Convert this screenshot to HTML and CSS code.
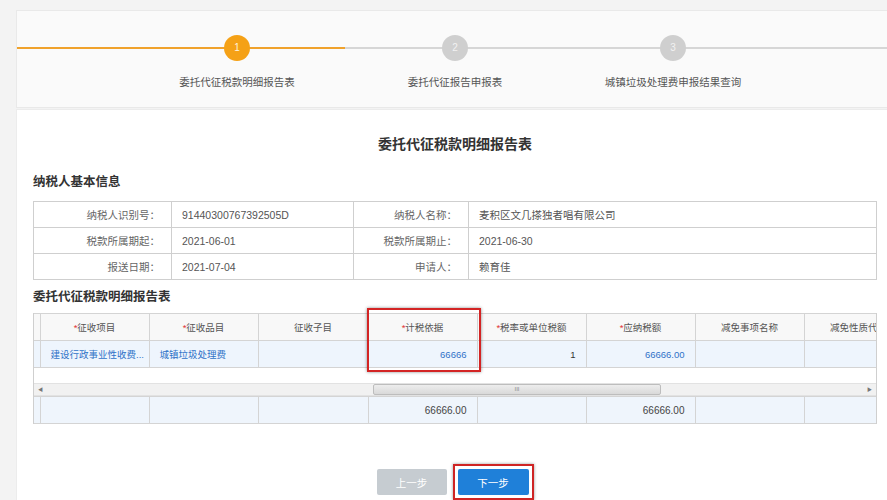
FILE: index.html
```html
<!DOCTYPE html>
<html lang="zh-CN">
<head>
<meta charset="utf-8">
<title>委托代征税款明细报告表</title>
<link rel="stylesheet" href="styles.css">
</head>
<body>
<div class="page">
  <div class="steps-panel">
    <div class="steps">
      <div class="step active"><span class="dot">1</span><span class="label">委托代征税款明细报告表</span></div>
      <div class="step"><span class="dot">2</span><span class="label">委托代征报告申报表</span></div>
      <div class="step"><span class="dot">3</span><span class="label">城镇垃圾处理费申报结果查询</span></div>
    </div>
  </div>
  <div class="main">
    <h1 class="title">委托代征税款明细报告表</h1>
    <h2 class="sec">纳税人基本信息</h2>
    <table class="info">
      <colgroup><col class="c1"><col class="c2"><col class="c3"><col></colgroup>
      <tr><td class="lbl">纳税人识别号：</td><td>91440300767392505D</td><td class="lbl">纳税人名称：</td><td>麦积区文几搽独者唱有限公司</td></tr>
      <tr><td class="lbl">税款所属期起：</td><td>2021-06-01</td><td class="lbl">税款所属期止：</td><td>2021-06-30</td></tr>
      <tr><td class="lbl">报送日期：</td><td>2021-07-04</td><td class="lbl">申请人：</td><td>赖育佳</td></tr>
    </table>
    <h2 class="sec sec2">委托代征税款明细报告表</h2>
    <div class="grid">
      <div class="grid-view">
        <table class="gt">
          <colgroup><col class="rn"><col class="w"><col class="w"><col class="w w110"><col class="w"><col class="w"><col class="w"><col class="w"><col class="w"></colgroup>
          <tr class="head">
            <td></td>
            <td><i>*</i>征收项目</td>
            <td><i>*</i>征收品目</td>
            <td>征收子目</td>
            <td><i>*</i>计税依据</td>
            <td><i>*</i>税率或单位税额</td>
            <td><i>*</i>应纳税额</td>
            <td>减免事项名称</td>
            <td>减免性质代码</td>
          </tr>
          <tr class="data">
            <td></td>
            <td class="link">建设行政事业性收费...</td>
            <td class="link">城镇垃圾处理费</td>
            <td></td>
            <td class="num link">66666</td>
            <td class="num dark">1</td>
            <td class="num link">66666.00</td>
            <td></td>
            <td></td>
          </tr>
        </table>
      </div>
      <div class="grid-space"></div>
      <div class="hscroll">
        <span class="arr">&#9664;</span>
        <span class="thumb">III</span>
        <span class="arr arr-r">&#9654;</span>
      </div>
      <div class="grid-view">
        <table class="gt foot">
          <colgroup><col class="rn"><col class="w"><col class="w"><col class="w w110"><col class="w"><col class="w"><col class="w"><col class="w"><col class="w"></colgroup>
          <tr>
            <td></td><td></td><td></td><td></td>
            <td class="num">66666.00</td>
            <td></td>
            <td class="num">66666.00</td>
            <td></td><td></td>
          </tr>
        </table>
      </div>
      <div class="highlight"></div>
    </div>
    <div class="actions">
      <button class="btn prev" type="button">上一步</button>
      <span class="mark"><button class="btn next" type="button">下一步</button></span>
    </div>
  </div>
</div>
</body>
</html>
```

FILE: styles.css
```css
* { box-sizing: border-box; }
html, body { margin: 0; padding: 0; }
body {
  background: #f3f3f3;
  font-family: "Liberation Sans", "Noto Sans CJK SC", sans-serif;
  color: #444;
  width: 887px;
  height: 500px;
  overflow: hidden;
}
.page { padding: 10px 0 0 16px; }

.steps-panel {
  background: #fafafa;
  border: 1px solid #e9e9e9;
  border-right: none;
  height: 98px;
}
.steps {
  display: flex;
  padding: 24px 0 0 111px;
  height: 100%;
  background-image: linear-gradient(to right, #f0a22c 0, #f0a22c 328px, #d6d6d6 328px, #d6d6d6 100%);
  background-size: 100% 2px;
  background-position: 0 36px;
  background-repeat: no-repeat;
}
.step {
  width: 218px;
  display: flex;
  flex-direction: column;
  align-items: center;
}
.dot {
  width: 26px;
  height: 26px;
  border-radius: 50%;
  background: #cfcfcf;
  color: #f2f2f2;
  font-size: 10px;
  line-height: 26px;
  text-align: center;
}
.step.active .dot { background: #f5a116; color: #fff3dd; }
.label {
  margin-top: 13px;
  font-size: 10.5px;
  line-height: 16px;
  color: #555;
  white-space: nowrap;
}

.main {
  background: #fff;
  border-left: 1px solid #ececec;
  border-top: 1px solid #ececec;
  margin-top: 1px;
  height: 392px;
  padding: 24px 10px 0 16px;
}
.title {
  margin: 0 0 19px;
  text-align: center;
  font-size: 14px;
  line-height: 20px;
  font-weight: bold;
  color: #333;
}
.sec {
  margin: 0 0 10px;
  font-size: 12.5px;
  line-height: 18px;
  font-weight: bold;
  color: #333;
}
.sec2 { margin: 8px 0 7px; }

.info {
  width: 844px;
  border-collapse: collapse;
  table-layout: fixed;
  font-size: 10.5px;
  color: #555;
}
.info col.c1 { width: 138px; }
.info col.c2 { width: 182px; }
.info col.c3 { width: 115px; }
.info td {
  border: 1px solid #cfcfcf;
  height: 26px;
  padding: 0 10px;
  white-space: nowrap;
}
.info td.lbl { text-align: right; padding-right: 11px; color: #666; }

.grid {
  position: relative;
  width: 844px;
  border: 1px solid #cfcfcf;
  border-top: none;
  border-bottom: none;
}
.grid-view { overflow: hidden; width: 100%; }
.gt {
  width: 879px;
  border-collapse: collapse;
  table-layout: fixed;
  font-size: 9.5px;
}
.gt col.rn { width: 6px; }
.gt col.w { width: 109px; }
.gt col.w110 { width: 110px; }
.gt td {
  border: 1px solid #d4d4d4;
  height: 27px;
  padding: 0 10px;
  white-space: nowrap;
  overflow: hidden;
}
.gt td:first-child { padding: 0; border-left: none; }
.gt tr.head td { background: #f8f8f8; text-align: center; color: #555; }
.gt tr.head td i { font-style: normal; color: #e03434; }
.gt tr.data td { background: #eef5fd; }
.gt td.link { color: #2f72c8; }
.gt td.num { text-align: right; }
.gt td.dark { color: #333; }
.gt.foot td { background: #eff5fc; color: #444; font-size: 10px; }

.grid-space { height: 15px; background: #fff; }
.hscroll {
  display: flex;
  align-items: center;
  height: 13px;
  background: #f1f1f1;
  border-top: 1px solid #e2e2e2;
  border-bottom: 1px solid #e2e2e2;
}
.arr {
  width: 13px;
  font-size: 5px;
  color: #777;
  text-align: center;
  line-height: 11px;
}
.arr-r { margin-left: auto; }
.thumb {
  margin-left: 326px;
  width: 288px;
  height: 11px;
  background: linear-gradient(#ededed, #d9d9d9);
  border: 1px solid #bdbdbd;
  border-radius: 2px;
  font-size: 6px;
  line-height: 9px;
  color: #888;
  text-align: center;
}

.highlight {
  position: absolute;
  left: 333px;
  top: -5px;
  width: 114px;
  height: 64px;
  border: 2px solid #d32424;
  box-shadow: 0 0 3px rgba(0, 0, 0, 0.45);
}

.actions {
  display: flex;
  justify-content: center;
  align-items: center;
  gap: 6px;
  margin-top: 40px;
}
.btn {
  border: none;
  border-radius: 2px;
  height: 26px;
  font-family: "Liberation Sans", "Noto Sans CJK SC", sans-serif;
  font-size: 10.5px;
  color: #fff;
  padding: 0;
}
.prev { width: 70px; background: #c6ccd1; }
.next { width: 71px; background: #1f80d9; display: block; }
.mark {
  display: block;
  border: 2px solid #cf2424;
  padding: 3px;
  box-shadow: 0 0 3px rgba(0, 0, 0, 0.4);
}
```
